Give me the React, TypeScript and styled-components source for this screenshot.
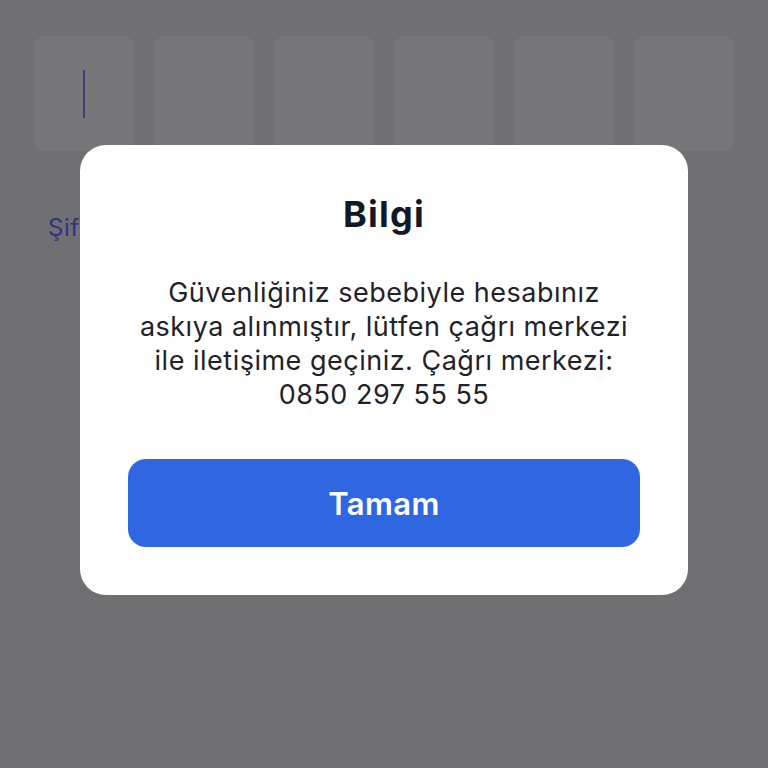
import React from "react";
import styled, { createGlobalStyle } from "styled-components";

const Global = createGlobalStyle`
  html, body { margin: 0; padding: 0; }
  body { background: #707072; font-family: Inter, "Noto Sans", sans-serif; }
  * { box-sizing: border-box; }
`;

const Page = styled.div`
  width: 768px;
  height: 768px;
  background: #707072;
  padding: 36px 34px 0;
  overflow: hidden;
`;

const CodeRow = styled.div`
  display: grid;
  grid-template-columns: repeat(6, 100px);
  gap: 20px;
`;

const CodeBox = styled.div`
  height: 115px;
  border-radius: 11px;
  background: #77777a;
  display: flex;
  align-items: center;
  justify-content: center;
`;

const Caret = styled.div`
  width: 2px;
  height: 48px;
  background: #3c3f78;
`;

const ForgotLink = styled.div`
  margin: 63px 0 0 14px;
  font-size: 24px;
  color: #2e3583;
  line-height: 28px;
  letter-spacing: 0.5px;
`;

const Overlay = styled.div`
  position: fixed;
  inset: 0;
  display: flex;
  justify-content: center;
  align-items: flex-start;
  padding-top: 145px;
`;

const Dialog = styled.div`
  width: 608px;
  height: 450px;
  background: #ffffff;
  border-radius: 26px;
  display: flex;
  flex-direction: column;
  align-items: center;
  padding: 46px 40px 0;
`;

const Title = styled.h2`
  margin: 0;
  font-size: 36px;
  font-weight: 700;
  color: #111827;
  line-height: 46px;
  letter-spacing: 1.2px;
`;

const Message = styled.p`
  margin: 39px 0 0;
  font-size: 27px;
  line-height: 34px;
  letter-spacing: 0.5px;
  color: #1f2228;
  text-align: center;
  width: 100%;
`;

const Line = styled.span`
  display: block;
  white-space: nowrap;
`;

const OkButton = styled.button`
  margin-top: 47px;
  width: 512px;
  height: 88px;
  flex-shrink: 0;
  border: none;
  border-radius: 18px;
  background: #2f67e3;
  color: #ffffff;
  font-family: Inter, "Noto Sans", sans-serif;
  font-size: 31px;
  font-weight: 600;
  letter-spacing: 0.4px;
`;

const lines = [
  "Güvenliğiniz sebebiyle hesabınız",
  "askıya alınmıştır, lütfen çağrı merkezi",
  "ile iletişime geçiniz. Çağrı merkezi:",
  "0850 297 55 55",
];

export default function App() {
  return (
    <>
      <Global />
      <Page>
        <CodeRow>
          {Array.from({ length: 6 }).map((_, i) => (
            <CodeBox key={i}>{i === 0 && <Caret />}</CodeBox>
          ))}
        </CodeRow>
        <ForgotLink>Şifremi unuttum</ForgotLink>
      </Page>
      <Overlay>
        <Dialog>
          <Title>Bilgi</Title>
          <Message>
            {lines.map((l) => (
              <Line key={l}>{l}</Line>
            ))}
          </Message>
          <OkButton>Tamam</OkButton>
        </Dialog>
      </Overlay>
    </>
  );
}
